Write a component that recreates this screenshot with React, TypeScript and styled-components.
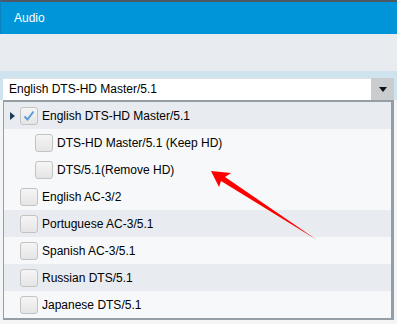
import styled, { createGlobalStyle } from "styled-components";

const GlobalStyle = createGlobalStyle`
  html, body {
    margin: 0;
    padding: 0;
    background: #f3f5f7;
    font-family: "Liberation Sans", Arial, sans-serif;
  }
`;

type Track = { label: string; level: 0 | 1; checked?: boolean; expandable?: boolean; shade: boolean };

const tracks: Track[] = [
  { label: "English DTS-HD Master/5.1", level: 0, checked: true, expandable: true, shade: true },
  { label: "DTS-HD Master/5.1 (Keep HD)", level: 1, shade: false },
  { label: "DTS/5.1(Remove HD)", level: 1, shade: false },
  { label: "English AC-3/2", level: 0, shade: false },
  { label: "Portuguese AC-3/5.1", level: 0, shade: true },
  { label: "Spanish AC-3/5.1", level: 0, shade: false },
  { label: "Russian DTS/5.1", level: 0, shade: true },
  { label: "Japanese DTS/5.1", level: 0, shade: false },
];

const App = () => {
  return (
    <Page>
      <GlobalStyle />
      <Header>
        <Title>Audio</Title>
      </Header>
      <Toolbar />
      <Strip />
      <SelectRow>
        <Select>
          <SelectValue>English DTS-HD Master/5.1</SelectValue>
          <SelectButton>
            <svg width="8" height="5" viewBox="0 0 8 5">
              <path d="M0 0 H8 L4 5 Z" fill="#111" />
            </svg>
          </SelectButton>
        </Select>
      </SelectRow>
      <List>
        {tracks.map((t) => (
          <Row key={t.label} $shade={t.shade} $level={t.level}>
            {t.expandable && (
              <Expander>
                <svg width="5" height="8" viewBox="0 0 5 8">
                  <path d="M0 0 L5 4 L0 8 Z" fill="#1d3b5a" />
                </svg>
              </Expander>
            )}
            <Check>
              {t.checked && (
                <svg width="14" height="14" viewBox="0 0 14 14">
                  <path
                    d="M2.5 7.5 L5.5 10.5 L11.5 2.5"
                    fill="none"
                    stroke="#5b9bd6"
                    strokeWidth="2"
                  />
                </svg>
              )}
            </Check>
            <Label>{t.label}</Label>
          </Row>
        ))}
      </List>
      <Pointer width="397" height="324" viewBox="0 0 397 324">
        <polygon
          points="211,171 231,173 225,177 317,240 221,181 219,187"
          fill="#ff0000"
        />
      </Pointer>
    </Page>
  );
};

const Page = styled.div`
  position: relative;
  width: 397px;
  height: 324px;
  overflow: hidden;
  background: #f3f5f7;
`;
const Header = styled.div`
  height: 32px;
  border-top: 2px solid #4e5864;
  background: #0095d9;
  border-left: 1px solid #0a82be;
  display: flex;
  align-items: center;
  padding-left: 13px;
`;
const Title = styled.span`
  color: #fff;
  font-size: 12px;
`;
const Toolbar = styled.div`
  height: 37px;
  background: #e8ecf1;
`;
const Strip = styled.div`
  height: 7px;
  background: #cfe3ef;
`;
const SelectRow = styled.div`
  background: #cfe3ef;
  padding: 0 3px;
`;
const Select = styled.div`
  height: 22px;
  display: flex;
  background: #fff;
  box-shadow: inset 0 1px 0 #dfe3e6;
`;
const SelectValue = styled.div`
  flex: 1;
  display: flex;
  align-items: center;
  padding-left: 6px;
  font-size: 12px;
  color: #000;
`;
const SelectButton = styled.div`
  width: 23px;
  background: #c9cdd0;
  display: flex;
  align-items: center;
  justify-content: center;
`;
const List = styled.div`
  margin: 0 3px;
  border: 2px solid #959da5;
  border-right-width: 3px;
  border-left-width: 1px;
  background: #f7f8fa;
`;
const Row = styled.div<{ $shade: boolean; $level: 0 | 1 }>`
  position: relative;
  height: 27px;
  display: flex;
  align-items: center;
  gap: 4px;
  padding-left: ${(p) => (p.$level === 1 ? 31 : 16)}px;
  background: ${(p) => (p.$shade ? "#e8ebf0" : "#f7f8fa")};
`;
const Expander = styled.span`
  position: absolute;
  left: 6px;
  top: 10px;
  display: flex;
`;
const Check = styled.span`
  width: 16px;
  height: 16px;
  border: 1px solid #c3c3c3;
  border-radius: 3px;
  background: linear-gradient(#f5f5f5, #e5e5e5);
  display: flex;
  align-items: center;
  justify-content: center;
`;
const Label = styled.span`
  font-size: 12px;
  color: #000;
`;
const Pointer = styled.svg`
  position: absolute;
  left: 0;
  top: 0;
  pointer-events: none;
`;

export default App;
